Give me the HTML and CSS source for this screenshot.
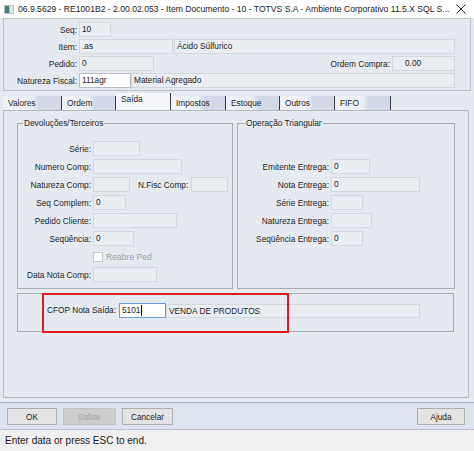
FILE: index.html
```html
<!DOCTYPE html>
<html lang="pt">
<head>
<meta charset="utf-8">
<title>Item Documento</title>
<link rel="stylesheet" href="styles.css">
</head>
<body>
<div class="titlebar">
  <svg class="ticon" width="10" height="9" viewBox="0 0 10 9"><rect x="0" y="0" width="10" height="9" fill="#b9c2c4"/><rect x="1" y="1" width="4" height="7" fill="#3f7d78"/><rect x="6" y="1" width="3" height="7" fill="#dfe4e6"/></svg>
  <span class="title-text">06.9.5629 - RE1001B2 - 2.00.02.053 - Item Documento - 10 - TOTVS S.A - Ambiente Corporativo 11.5.X SQL S...</span>
  <svg class="close" width="10" height="10" viewBox="0 0 10 10"><path d="M0.5 0.5L9.5 9.5M9.5 0.5L0.5 9.5" stroke="#222" stroke-width="1"/></svg>
</div>

<div class="top">
  <div class="row"><span class="lbl">Seq:</span><div class="fld w-seq">10</div></div>
  <div class="row"><span class="lbl">Item:</span><div class="fld w-item">.as</div><div class="fld grow gap1">Ácido Súlfurico</div></div>
  <div class="row"><span class="lbl">Pedido:</span><div class="fld w-ped">0</div><span class="lbl-oc">Ordem Compra:</span><div class="fld w-oc">0.00</div></div>
  <div class="row"><span class="lbl">Natureza Fiscal:</span><div class="fld white w-nat">111agr</div><div class="fld grow">Material Agregado</div></div>
</div>

<div class="tabs">
  <div class="tab t-valores">Valores</div>
  <div class="tab t-ordem">Ordem</div>
  <div class="tab active t-saida">Saída</div>
  <div class="tab t-impostos">Impostos</div>
  <div class="tab t-estoque">Estoque</div>
  <div class="tab t-outros">Outros</div>
  <div class="tab t-fifo">FIFO</div>
</div>

<div class="tabpanel">
  <div class="groups">
    <div class="grp grp-left">
      <span class="grp-title">Devoluções/Terceiros</span>
      <div class="grow-row"><span class="glbl">Série:</span><div class="fld w-47"></div></div>
      <div class="grow-row"><span class="glbl">Numero Comp:</span><div class="fld w-89"></div></div>
      <div class="grow-row"><span class="glbl">Natureza Comp:</span><div class="fld w-37"></div><span class="lbl-nf">N.Fisc Comp:</span><div class="fld w-37"></div></div>
      <div class="grow-row"><span class="glbl">Seq Complem:</span><div class="fld w-33">0</div></div>
      <div class="grow-row"><span class="glbl">Pedido Cliente:</span><div class="fld w-84"></div></div>
      <div class="grow-row"><span class="glbl">Seqüência:</span><div class="fld w-41">0</div></div>
      <div class="grow-row"><span class="glbl"></span><span class="chk"></span><span class="chk-lbl">Reabre Ped</span></div>
      <div class="grow-row"><span class="glbl">Data Nota Comp:</span><div class="fld w-64"></div></div>
    </div>
    <div class="grp grp-right">
      <span class="grp-title">Operação Triangular</span>
      <div class="grow-row"><span class="glbl">Emitente Entrega:</span><div class="fld w-39">0</div></div>
      <div class="grow-row"><span class="glbl">Nota Entrega:</span><div class="fld w-89">0</div></div>
      <div class="grow-row"><span class="glbl">Série Entrega:</span><div class="fld w-32"></div></div>
      <div class="grow-row"><span class="glbl">Natureza Entrega:</span><div class="fld w-41"></div></div>
      <div class="grow-row"><span class="glbl">Seqüência Entrega:</span><div class="fld w-32">0</div></div>
    </div>
  </div>

  <div class="cfop">
    <span class="cfop-lbl">CFOP Nota Saída:</span>
    <div class="fld focus w-cfop">5101<span class="caret"></span></div>
    <div class="fld w-desc">VENDA DE PRODUTOS</div>
    <div class="redbox"></div>
  </div>
</div>

<div class="buttonbar">
  <button class="btn b-ok">OK</button>
  <button class="btn b-salvar" disabled>Salvar</button>
  <button class="btn b-cancelar">Cancelar</button>
  <button class="btn b-ajuda">Ajuda</button>
</div>

<div class="status">Enter data or press ESC to end.</div>
</body>
</html>
```

FILE: styles.css
```css
* { box-sizing: border-box; }

body {
  margin: 0;
  width: 474px;
  height: 451px;
  overflow: hidden;
  background: #e5e9f0;
  font-family: "Liberation Sans", Arial, sans-serif;
  font-size: 8.3px;
  color: #1e1e1e;
  display: flex;
  flex-direction: column;
}

/* title bar */
.titlebar {
  height: 18px;
  flex: none;
  background: #ffffff;
  display: flex;
  align-items: center;
  padding-left: 4px;
  font-size: 8.6px;
  color: #1a1a1a;
}
.ticon { margin-right: 4px; flex: none; }
.title-text { flex: 1; white-space: nowrap; overflow: hidden; }
.close { margin-right: 8px; flex: none; }

/* top header panel */
.top {
  flex: none;
  height: 73px;
  margin: 0 3px 0 3px;
  border: 1px solid #bcc0c8;
  padding: 3px 15px 0 0;
  display: flex;
  flex-direction: column;
  gap: 2px;
}
.row {
  display: flex;
  align-items: center;
  height: 15px;
}
.lbl {
  width: 73px;
  margin-right: 2px;
  text-align: right;
  white-space: nowrap;
}
.lbl-oc {
  margin-left: auto;
  margin-right: 2px;
  white-space: nowrap;
}

.fld {
  height: 15px;
  flex: none;
  border: 1px solid #d3d7de;
  background: #eaedf2;
  padding: 0 2px;
  line-height: 13px;
  white-space: nowrap;
  overflow: hidden;
  color: #222;
}
.fld.grow { flex: 1; }
.fld.gap1 { margin-left: 1px; }
.fld.white { background: #ffffff; border-color: #b8bcc4; }
.fld.focus { background: #ffffff; border-color: #6f9bd4; display: flex; align-items: center; }

.w-seq { width: 32px; }
.w-item { width: 94px; }
.w-ped { width: 75px; }
.w-oc { width: 63px; padding-left: 12px; }
.w-nat { width: 52px; }

/* tabs */
.tabs {
  flex: none;
  display: flex;
  align-items: flex-end;
  height: 17px;
  margin: 2px 0 0 3px;
}
.tab {
  height: 14px;
  border-right: 1px solid #3a3a3a;
  padding-left: 5px;
  line-height: 14px;
  white-space: nowrap;
  background: linear-gradient(to right, #f0f2f6 0%, #eceff4 50%, #d2daea 62%, #d2daea 100%);
}
.tab.active {
  height: 17px;
  line-height: 13px;
  background: #f5f6f9;
}
.t-valores { width: 59px; }
.t-ordem { width: 54px; }
.t-saida { width: 55px; }
.t-impostos { width: 55px; }
.t-estoque { width: 54px; }
.t-outros { width: 55px; }
.t-fifo { width: 56px; }

/* tab panel */
.tabpanel {
  flex: none;
  height: 288px;
  margin: 0 5px 0 3px;
  border: 1px solid #b4b8c0;
  padding: 12px 0 0 13px;
}
.groups {
  display: flex;
  gap: 4px;
}
.grp {
  position: relative;
  height: 166px;
  border: 1px solid #a8acb4;
  display: flex;
  flex-direction: column;
  gap: 3px;
}
.grp-left { width: 216px; padding-top: 17px; }
.grp-right { width: 218px; padding-top: 35px; }
.grp-title {
  position: absolute;
  top: -6px;
  left: 5px;
  padding: 0 1px;
  line-height: 11px;
  background: #e5e9f0;
  white-space: nowrap;
}
.grp-right .grp-title { left: 7px; }

.grow-row {
  display: flex;
  align-items: center;
  height: 15px;
}
.glbl {
  width: 73px;
  margin-right: 2px;
  text-align: right;
  white-space: nowrap;
  flex: none;
}
.grp-right .glbl { width: 91px; }
.lbl-nf {
  margin-left: 8px;
  margin-right: 3px;
  white-space: nowrap;
}
.w-47 { width: 47px; }
.w-89 { width: 89px; }
.w-37 { width: 37px; }
.w-33 { width: 33px; }
.w-84 { width: 84px; }
.w-41 { width: 41px; }
.w-64 { width: 64px; }
.w-39 { width: 39px; }
.w-32 { width: 32px; }

.chk {
  width: 10px;
  height: 10px;
  background: #ffffff;
  border: 1px solid #c4c8ce;
  flex: none;
}
.chk-lbl {
  margin-left: 3px;
  color: #9a9ea6;
  font-size: 8.6px;
}

/* cfop */
.cfop {
  position: relative;
  margin-top: 4px;
  width: 437px;
  height: 39px;
  border: 1px solid #a8acb4;
  padding-top: 9px;
  display: flex;
  align-items: flex-start;
}
.cfop-lbl {
  width: 98px;
  margin-right: 3px;
  text-align: right;
  line-height: 15px;
  white-space: nowrap;
}
.w-cfop { width: 47px; }
.w-desc { width: 254px; margin-top: 1px; height: 14px; line-height: 12px; }
.caret {
  display: inline-block;
  width: 1px;
  height: 11px;
  background: #000;
  margin-left: 1px;
}
.redbox {
  position: absolute;
  left: 24px;
  top: -1px;
  width: 247px;
  height: 40px;
  border: 2px solid #e01a22;
}

/* buttons */
.buttonbar {
  flex: none;
  height: 28px;
  margin-top: 4px;
  background: #dde4ef;
  border-top: 1px solid #a9b1bf;
  border-bottom: 1px solid #bac1cd;
  padding: 5px 9px 0 7px;
  display: flex;
  align-items: flex-start;
  gap: 6px;
}
.btn {
  height: 17px;
  padding: 0;
  font-family: "Liberation Sans", Arial, sans-serif;
  font-size: 8.3px;
  color: #1e1e1e;
  background: #e3e3e3;
  border: 1px solid #adadad;
  border-radius: 0;
}
.b-ok { width: 50px; }
.b-salvar { width: 53px; background: #cdcdcd; border-color: #c2c2c2; color: #a2a2a2; }
.b-cancelar { width: 51px; }
.b-ajuda { width: 48px; margin-left: auto; }

/* status */
.status {
  flex: 1;
  background: #f0f0f0;
  padding-left: 5px;
  font-size: 10px;
  line-height: 21px;
  color: #1a1a1a;
}
```
